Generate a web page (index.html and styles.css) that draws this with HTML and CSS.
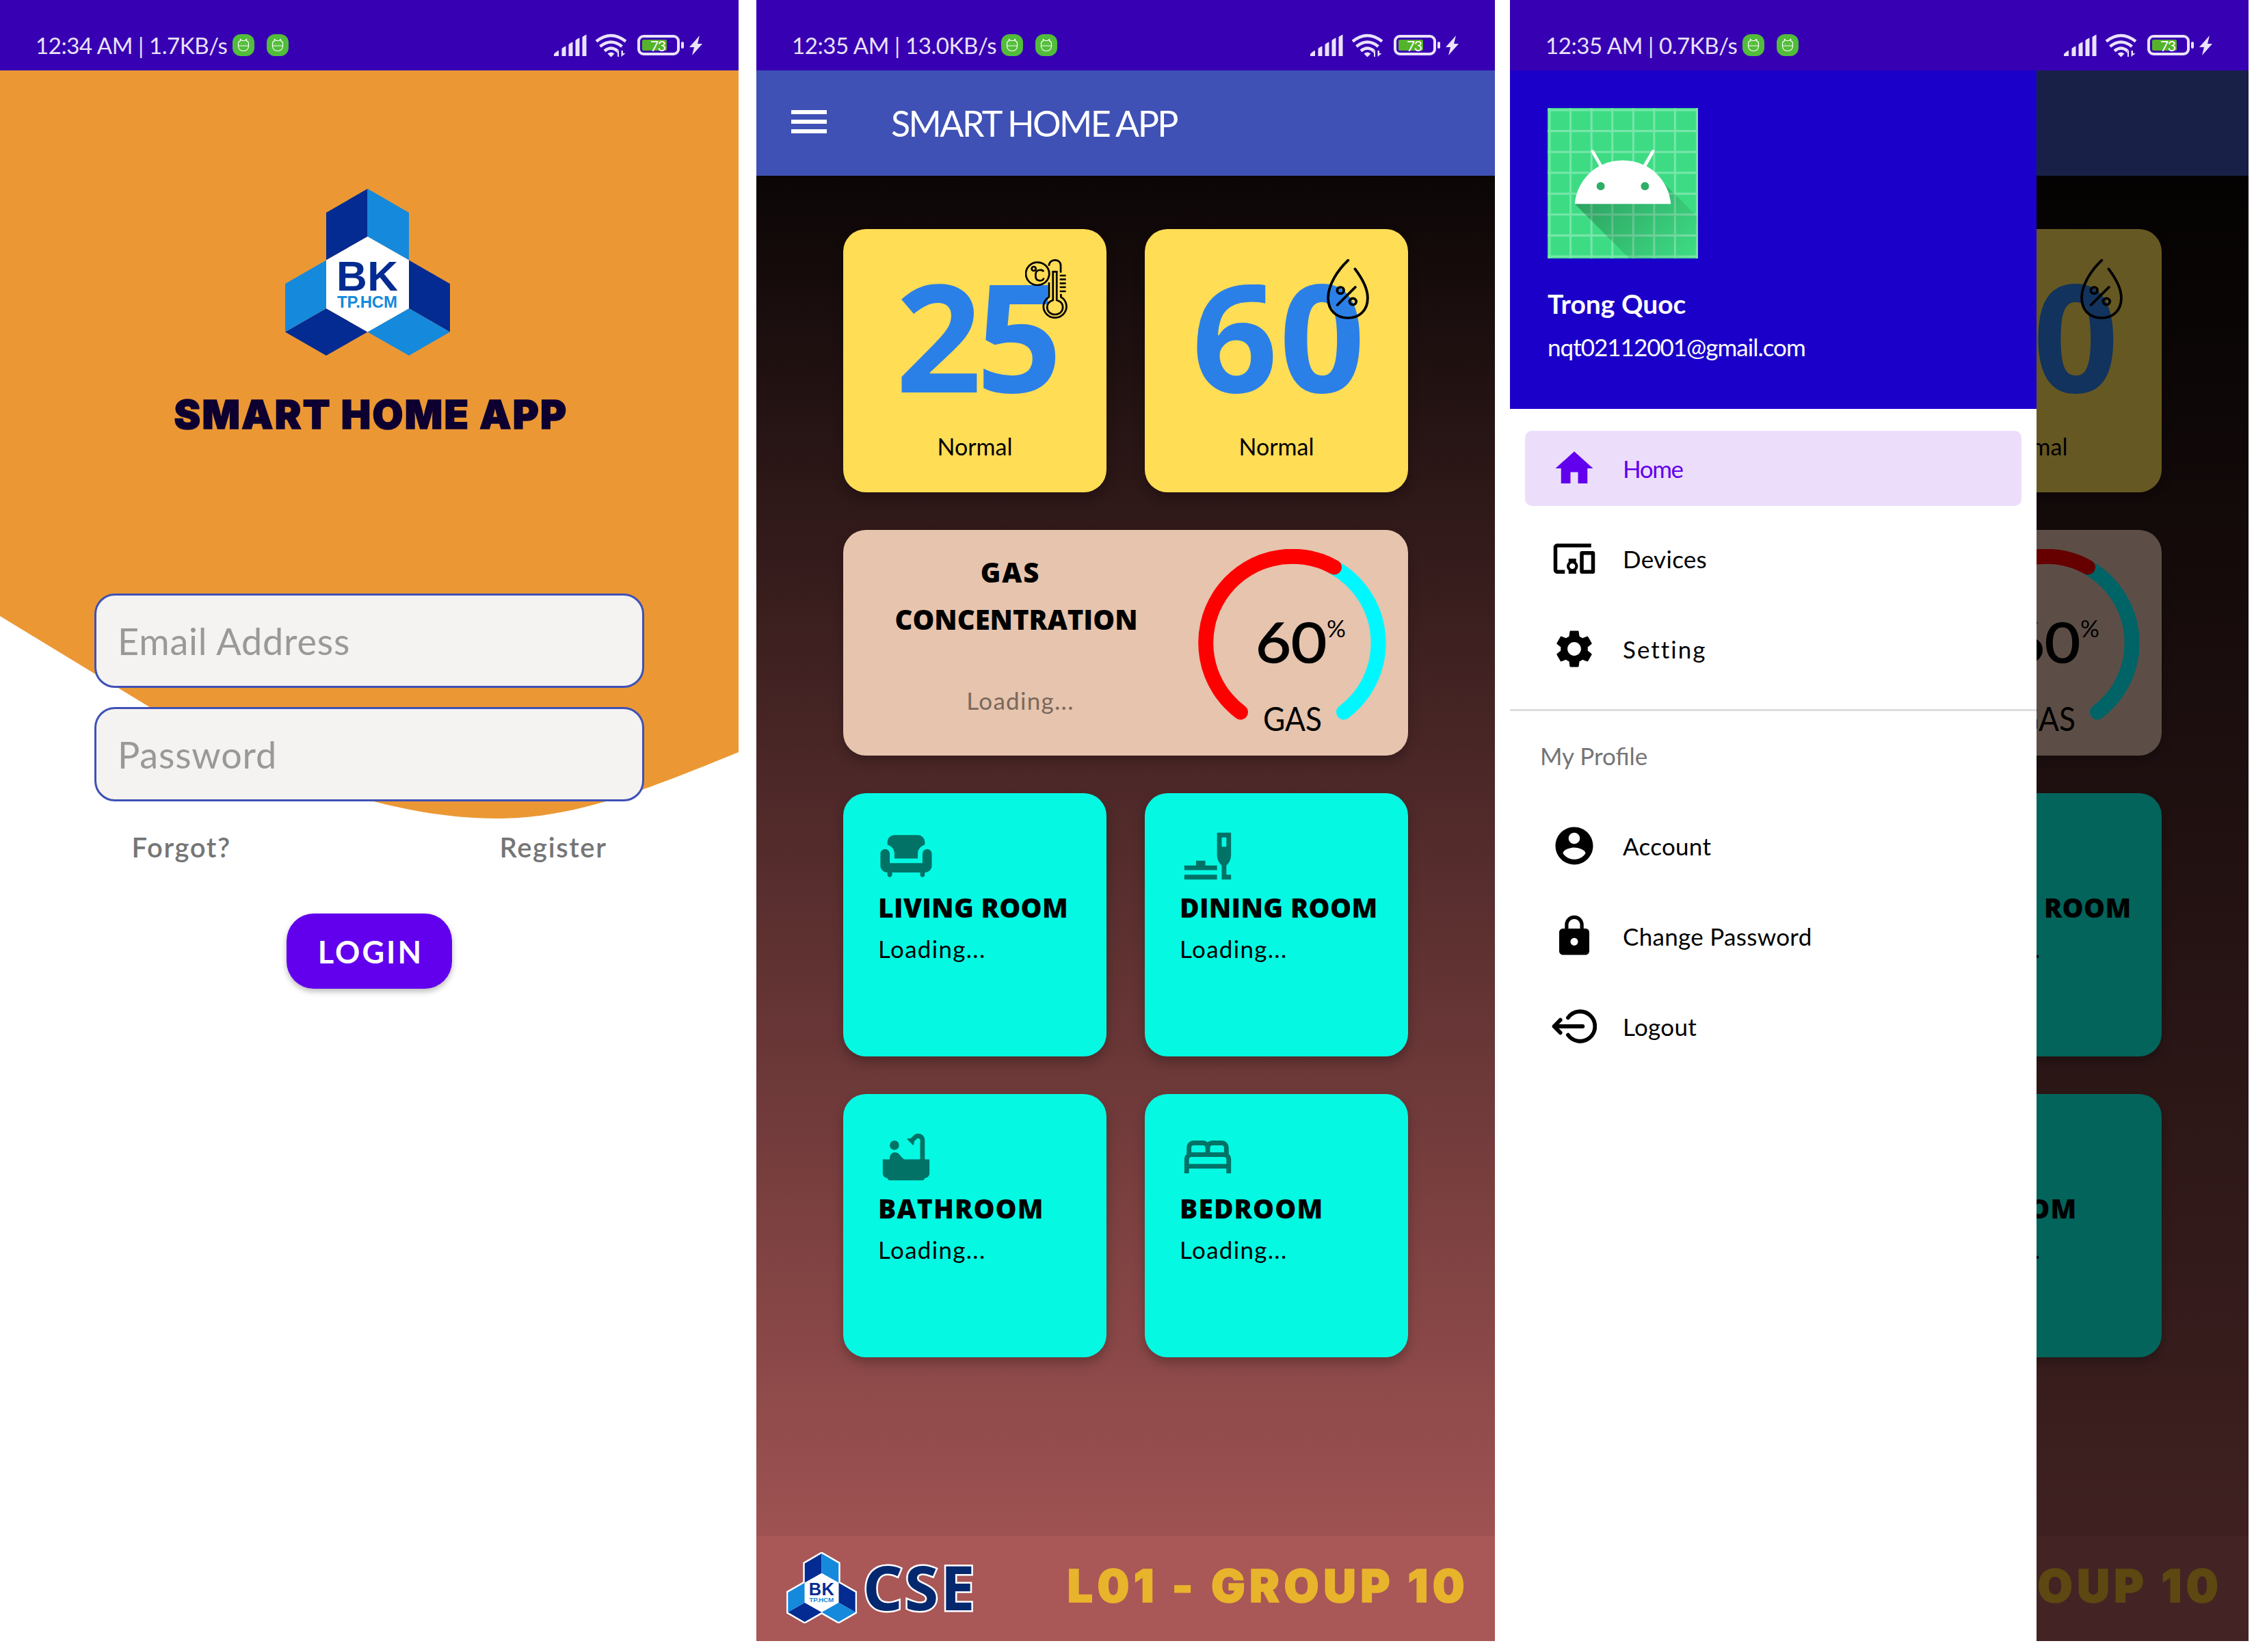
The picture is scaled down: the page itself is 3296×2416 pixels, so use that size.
FILE: index.html
```html
<!DOCTYPE html>
<html lang="en">
<head>
<meta charset="utf-8">
<title>Smart Home App</title>
<link rel="stylesheet" href="styles.css">
</head>
<body>
<svg class="defs" aria-hidden="true">
  <symbol id="bk" viewBox="0 0 241 244">
    <path fill="#032b91" d="M120.500 0V70L60 104.500V35zM0 209.500l60-34.500 60.500 34.500L60 244zM181 104.500l60 34.500v70.500L181 175z"/>
    <path fill="#1589dc" d="M120.500 0V70l60.500 34.500V35zM0 139l60-34.500V175L0 209.500zM120.500 209.500L181 175l60 34.500L181 244z"/>
    <path fill="#fff" d="M120.500 70l60.500 34.500V175l-60.500 34.500L60 175v-70.500z"/>
    <text x="75" y="148.700" font-size="62" font-weight="700" font-family="Liberation Sans" fill="#032b91" textLength="90">BK</text>
    <text x="76" y="174" font-size="24" font-weight="700" font-family="Liberation Sans" fill="#1589dc" textLength="88">TP.HCM</text>
  </symbol>
  <symbol id="app" viewBox="0 0 32 32">
    <rect width="32" height="32" rx="12" fill="#52bd3a"/>
    <path d="M8.500 17h15c0 5-3 7.500-7.500 7.500S8.500 22 8.500 17zv-3c0-3 2-4 3-4.200V7.500l2.500 2h4l2.500-2v2.300c1 .2 3 1.200 3 4.200v3M12.500 14h.6M18.500 14h.6" fill="none" stroke="#fff" stroke-width="1.200"/>
  </symbol>
  <symbol id="status-icons" viewBox="0 0 220 36">
    <path fill="#ebe2fb" d="M0 31q5-5 7-5v8H0zM11.500 23q4-3.500 6-3.500V34h-6zM21.500 17q4-3.500 6-3.500V34h-6zM31.500 11q4-3.500 6-3.500V34h-6zM41.500 6q4-3 6-3.500V34h-6zM78.500 30.500q5-4 10 0l-5 5zM93 35v-6h-2l4-4v10zM101 26v6h-2.500V26zM98.500 35v-9h2v4h4z"/>
    <g fill="none" stroke="#ebe2fb" stroke-width="4.500"><path d="M62 12.500q21.500-17 43 0M67.500 20q16-13 32 0M74 26.500q9.500-8 19 0"/></g>
    <rect x="124" y="5" width="58" height="26" rx="7" fill="none" stroke="#ebe2fb" stroke-width="4"/>
    <rect x="129" y="10" width="36" height="16" rx="2" fill="#55b22a"/>
    <rect x="186" y="13" width="4" height="10" rx="2" fill="#ebe2fb"/>
    <text x="141" y="26.500" font-size="21" font-family="Lato" fill="#fff" textLength="23">73</text>
    <path fill="#ebe2fb" d="M213 4l-15 17h7l-3 12 15-17h-7z"/>
  </symbol>
  <symbol id="thermo" viewBox="55 57 181 264" preserveAspectRatio="none">
    <g fill="none" stroke="#000" stroke-width="8">
      <circle cx="108" cy="121" r="50"/><circle cx="92" cy="99" r="9"/>
      <path d="M134 112c-5-12-33-10-34 10v12c2 22 30 22 35 6M157 86c0-33 50-33 50-2v32M157 159v64a49 49 0 1 0 51 0v-13M174 237V112h16v125c17 5 26 16 26 30 0 44-67 44-67 0 0-14 10-25 25-30zM203 129h26M203 146h26M203 163h26M203 180h26M203 198h26"/>
    </g>
  </symbol>
  <symbol id="drop" viewBox="1337 57 178 264" preserveAspectRatio="none">
    <g fill="none" stroke="#000" stroke-width="11" stroke-linecap="round">
      <path d="M1427 62c-45 45-84 107-84 165 0 55 35 88 83 88s83-33 83-88c0-41-24-87-53-127M1382 258l75-78"/>
      <circle cx="1395" cy="194" r="14"/><circle cx="1447" cy="243" r="14"/>
    </g>
  </symbol>
  <symbol id="gauge" viewBox="0 0 275 275">
    <g fill="none" stroke-width="22" stroke-linecap="round">
      <path stroke="#00f7ff" d="M199 27A126.500 126.500 0 0 1 213 238.500"/>
      <path stroke="red" d="M62 238.500A126.500 126.500 0 0 1 199 26.500"/>
    </g>
    <g font-family="Lato" fill="#000">
      <text x="84" y="166" font-size="82" textLength="104" lengthAdjust="spacingAndGlyphs" stroke="#000" stroke-width="1.500">60</text>
      <text x="188" y="129" font-size="34" textLength="28" lengthAdjust="spacingAndGlyphs">%</text>
      <text x="95" y="266" font-size="49" textLength="86" lengthAdjust="spacingAndGlyphs">GAS</text>
    </g>
  </symbol>
  <symbol id="sofa" viewBox="0 0 24 24"><path d="M7 3h10c1.660 0 3 1.340 3 3v1.200c-1.800.5-3 2-3 3.800v2H7v-2c0-1.800-1.200-3.300-3-3.800V6c0-1.660 1.340-3 3-3zM3 9c1.100 0 2 .9 2 2v4h14v-4c0-1.100.9-2 2-2s2 .9 2 2v5c0 1.660-1.340 3-3 3v1c0 .55-.45 1-1 1s-1-.45-1-1v-1H6v1c0 .55-.45 1-1 1s-1-.45-1-1v-1c-1.660 0-3-1.340-3-3v-5c0-1.100.9-2 2-2z"/></symbol>
  <symbol id="dining" viewBox="0 0 24 24"><path fill-rule="evenodd" d="M16 2h6v9.500c0 2-.9 3.500-2 4.500v4h2v2h-4v-6c-1.100-1-2-2.500-2-4.500zM18 4v4h2V4zM2 16h5v-2h4v2h5v2H2zM2 20h14v2H2z"/></symbol>
  <symbol id="bath" viewBox="0 0 24 24"><circle cx="7" cy="7" r="2"/><path d="M20 13V4.830C20 3.270 18.730 2 17.170 2c-.75 0-1.470.3-2 .83l-1.250 1.250c-.16-.05-.33-.08-.51-.08-.4 0-.77.12-1.080.32l2.760 2.760c.2-.31.32-.68.32-1.080 0-.18-.03-.34-.07-.51l1.250-1.250c.15-.15.36-.24.58-.24.46 0 .83.37.83.83V13h-6.850c-.3-.21-.57-.45-.82-.72l-1.400-1.550c-.19-.21-.43-.38-.69-.5-.31-.15-.65-.23-1-.23C6 10.010 5 11.010 5 12.250V13H2v6c0 1.100.9 2 2 2 0 .55.45 1 1 1h14c.55 0 1-.45 1-1 1.100 0 2-.9 2-2v-6h-2z"/></symbol>
  <symbol id="bed" viewBox="0 0 24 24"><path d="M21 10.780V8c0-1.650-1.350-3-3-3h-4c-.77 0-1.470.3-2 .78-.53-.48-1.230-.78-2-.78H6C4.350 5 3 6.350 3 8v2.780c-.61.55-1 1.340-1 2.220v6h2v-2h16v2h2v-6c0-.88-.39-1.670-1-2.220zM14 7h4c.55 0 1 .45 1 1v2h-6V8c0-.55.45-1 1-1zM5 8c0-.55.45-1 1-1h4c.55 0 1 .45 1 1v2H5V8zm-1 7v-2c0-.55.45-1 1-1h14c.55 0 1 .45 1 1v2H4z"/></symbol>
</svg>

<main class="board">
  <section class="phone login">
    <div class="status"><span class="clock">12:34 AM | 1.7KB/s</span><svg class="app"><use href="#app"/></svg><svg class="app"><use href="#app"/></svg><svg class="sys"><use href="#status-icons"/></svg></div>
    <div class="login-body">
      <svg class="wave" viewBox="0 103 1080 1100"><path fill="#eb9834" d="M0 103H1080V1100C940 1157 840 1197 726 1197C540 1197 340 1103 217 1033L0 901z"/></svg>
      <svg class="login-logo"><use href="#bk"/></svg>
      <h1 class="brand">SMART HOME APP</h1>
      <div class="field"><span>Email Address</span></div>
      <div class="field"><span>Password</span></div>
      <div class="links"><span class="forgot">Forgot?</span><span class="register">Register</span></div>
      <div class="button">LOGIN</div>
    </div>
  </section>

  <section class="phone home">
    <div class="status"><span class="clock wide">12:35 AM | 13.0KB/s</span><svg class="app"><use href="#app"/></svg><svg class="app"><use href="#app"/></svg><svg class="sys"><use href="#status-icons"/></svg></div>
    <div class="toolbar"><div class="burger"><i></i><i></i><i></i></div><span class="bar-title">SMART HOME APP</span></div>
    <div class="cards">
      <div class="card stat"><svg class="stat-icon"><use href="#thermo"/></svg><div class="num temp">25</div><div class="normal">Normal</div></div>
      <div class="card stat"><svg class="stat-icon"><use href="#drop"/></svg><div class="num">60</div><div class="normal">Normal</div></div>
      <div class="card gas"><div class="gas-text"><div class="gas-title"><span class="g1">GAS</span><span class="g2">CONCENTRATION</span></div><div class="loading">Loading...</div></div><svg class="gauge"><use href="#gauge"/></svg></div>
      <div class="card room"><svg class="room-icon"><use href="#sofa"/></svg><div class="room-name">LIVING ROOM</div><div class="loading">Loading...</div></div>
      <div class="card room"><svg class="room-icon"><use href="#dining"/></svg><div class="room-name">DINING ROOM</div><div class="loading">Loading...</div></div>
      <div class="card room"><svg class="room-icon"><use href="#bath"/></svg><div class="room-name spaced">BATHROOM</div><div class="loading">Loading...</div></div>
      <div class="card room"><svg class="room-icon"><use href="#bed"/></svg><div class="room-name spaced">BEDROOM</div><div class="loading">Loading...</div></div>
    </div>
    <div class="footer"><svg class="foot-logo" viewBox="-5 -5 251 254"><path fill="#fff" stroke="#fff" stroke-width="12" d="M120.500 0L181 35v69.500L241 139v70.500L181 244l-60.500-34.500L60 244 0 209.500V139l60-34.500V35z"/><use href="#bk" width="241" height="244"/></svg><span class="cse">CSE</span><span class="group">L01 - GROUP 10</span></div>
  </section>

  <section class="phone home menu-open">
    <div class="status"><span class="clock">12:35 AM | 0.7KB/s</span><svg class="app"><use href="#app"/></svg><svg class="app"><use href="#app"/></svg><svg class="sys"><use href="#status-icons"/></svg></div>
    <div class="toolbar"></div>
    <div class="cards">
      <div class="card stat"></div>
      <div class="card stat"><svg class="stat-icon"><use href="#drop"/></svg><div class="num">60</div><div class="normal">Normal</div></div>
      <div class="card gas"><div class="gas-text"></div><svg class="gauge"><use href="#gauge"/></svg></div>
      <div class="card room"></div>
      <div class="card room"><svg class="room-icon"><use href="#dining"/></svg><div class="room-name">DINING ROOM</div><div class="loading">Loading...</div></div>
      <div class="card room"></div>
      <div class="card room"><svg class="room-icon"><use href="#bed"/></svg><div class="room-name spaced">BEDROOM</div><div class="loading">Loading...</div></div>
    </div>
    <div class="footer"><span class="group">L01 - GROUP 10</span></div>
    <div class="scrim"></div>
    <aside class="drawer">
      <header class="profile">
        <svg class="avatar" viewBox="18 18 72 72">
          <defs><linearGradient id="sh" gradientUnits="userSpaceOnUse" x1="42.900" y1="49.600" x2="85.800" y2="92.500"><stop offset="0" stop-opacity=".27"/><stop offset="1" stop-opacity="0"/></linearGradient></defs>
          <path fill="#3ddc84" d="M18 18h72v72H18z"/>
          <path stroke="#fff" stroke-opacity=".3" stroke-width="1" d="M19 18v72M29 18v72M39 18v72M49 18v72M59 18v72M69 18v72M79 18v72M89.500 18v72M18 19h72M18 29h72M18 39h72M18 49h72M18 59h72M18 69h72M18 79h72M18 89h72"/>
          <path fill="url(#sh)" d="M31 63.900s6.400-11 12.100-13.100c7.200-2.600 26-1.400 26-1.400l38.100 38.100-.2 21.400-32-1z"/>
          <path fill="#fff" d="M65.300 45.830l3.800-6.600c.2-.4.1-.9-.3-1.100-.4-.2-.9-.1-1.100.3l-3.900 6.700c-6.300-2.800-13.400-2.800-19.700 0l-3.900-6.700c-.2-.4-.7-.5-1.100-.3-.3.2-.4.7-.2 1.100l3.800 6.600C36.200 49.430 31.700 56.030 31 63.930h46c-.7-7.900-5.200-14.500-11.700-18.100z"/>
          <circle cx="43.400" cy="55.400" r="1.950" fill="#2fae68"/><circle cx="64.600" cy="55.400" r="1.950" fill="#2fae68"/>
        </svg>
        <div class="name">Trong Quoc</div>
        <div class="mail">nqt02112001@gmail.com</div>
      </header>
      <nav class="nav">
        <div class="item active"><svg viewBox="0 0 24 24"><path d="M10 20v-6h4v6h5v-8h3L12 3 2 12h3v8z"/></svg><span class="tight">Home</span></div>
        <div class="item"><svg viewBox="0 0 24 24"><path d="M3 6h18V4H3c-1.100 0-2 .9-2 2v12c0 1.100.9 2 2 2h4v-2H3V6zm10 6H9v1.780c-.61.55-1 1.330-1 2.220s.39 1.670 1 2.220V20h4v-1.780c.61-.55 1-1.340 1-2.220s-.39-1.670-1-2.220V12zm-2 5.500c-.83 0-1.500-.67-1.500-1.500s.67-1.500 1.500-1.500 1.500.67 1.500 1.500-.67 1.500-1.500 1.500zM22 8h-6c-.5 0-1 .5-1 1v10c0 .5.5 1 1 1h6c.5 0 1-.5 1-1V9c0-.5-.5-1-1-1zm-1 10h-4v-8h4v8z"/></svg><span>Devices</span></div>
        <div class="item"><svg viewBox="0 0 24 24"><path d="M19.140 12.940c.04-.3.06-.61.06-.94 0-.32-.02-.64-.07-.94l2.030-1.580c.18-.14.23-.41.12-.61l-1.920-3.320c-.12-.22-.37-.29-.59-.22l-2.390.96c-.5-.38-1.030-.7-1.620-.94l-.36-2.540c-.04-.24-.24-.41-.48-.41h-3.840c-.24 0-.43.17-.47.41l-.36 2.540c-.59.24-1.130.57-1.620.94l-2.390-.96c-.22-.08-.47 0-.59.22L2.740 8.870c-.12.21-.08.47.12.61l2.030 1.580c-.05.3-.09.63-.09.94s.02.64.07.94l-2.030 1.580c-.18.14-.23.41-.12.61l1.920 3.320c.12.22.37.29.59.22l2.390-.96c.5.38 1.030.7 1.620.94l.36 2.540c.05.24.24.41.48.41h3.840c.24 0 .44-.17.47-.41l.36-2.540c.59-.24 1.130-.56 1.620-.94l2.390.96c.22.08.47 0 .59-.22l1.920-3.320c.12-.22.07-.47-.12-.61l-2.010-1.580zM12 15.600c-1.980 0-3.600-1.620-3.600-3.600s1.620-3.600 3.600-3.600 3.600 1.620 3.600 3.600-1.620 3.600-3.600 3.600z"/></svg><span class="loose">Setting</span></div>
        <div class="rule"></div>
        <div class="group-label">My Profile</div>
        <div class="item"><svg viewBox="0 0 24 24"><path d="M12 2C6.480 2 2 6.480 2 12s4.480 10 10 10 10-4.480 10-10S17.520 2 12 2zm0 3c1.660 0 3 1.340 3 3s-1.340 3-3 3-3-1.340-3-3 1.340-3 3-3zm0 14.200c-2.500 0-4.710-1.280-6-3.220.03-1.990 4-3.080 6-3.080 1.990 0 5.970 1.090 6 3.080-1.290 1.940-3.500 3.220-6 3.220z"/></svg><span>Account</span></div>
        <div class="item"><svg viewBox="0 0 24 24"><path d="M18 8h-1V6c0-2.760-2.240-5-5-5S7 3.240 7 6v2H6c-1.100 0-2 .9-2 2v10c0 1.100.9 2 2 2h12c1.100 0 2-.9 2-2V10c0-1.100-.9-2-2-2zm-6 9c-1.100 0-2-.9-2-2s.9-2 2-2 2 .9 2 2-.9 2-2 2zm3.100-9H8.900V6c0-1.710 1.390-3.100 3.100-3.100s3.100 1.390 3.100 3.100v2z"/></svg><span>Change Password</span></div>
        <div class="item"><svg viewBox="0 0 24 24"><path fill="none" stroke="#000" stroke-width="2.100" stroke-linecap="round" stroke-linejoin="round" d="M1.300 12H16.500M4.600 8.600L1.300 12l3.300 3.400M8.700 7.400a7.900 7.900 0 1 1 0 9.200"/></svg><span>Logout</span></div>
      </nav>
    </aside>
  </section>
</main>
</body>
</html>
```

FILE: styles.css
```css
* { box-sizing: border-box; }
body { margin: 0; background: #fff; color: #000; font-family: Lato, "Liberation Sans", sans-serif; }
svg { display: block; flex: none; }
.defs { display: none; }
.board { display: flex; width: 3296px; height: 2416px; overflow: hidden; white-space: nowrap; }
.phone { position: relative; flex: none; display: flex; flex-direction: column; width: 1080px; height: 2400px; overflow: hidden; }
.login { margin-right: 26px; background: #fff; }
.menu-open { margin-left: 22px; }

/* Status bar */
.status { display: flex; flex: none; align-items: center; height: 103px; padding: 29px 50px 0 52px; background: #3700b3; color: #ebe2fb; }
.clock { width: 288px; font-size: 33px; line-height: 40px; letter-spacing: -0.4px; }
.clock.wide { width: 306px; }
.app { width: 32px; height: 32px; margin-right: 18px; }
.sys { width: 220px; height: 36px; margin-left: auto; }

/* Login */
.login-body { position: relative; display: flex; flex-direction: column; align-items: center; }
.wave { position: absolute; top: 0; left: 0; width: 1080px; height: 1100px; }
.login-body > :not(.wave) { position: relative; }
.login-logo { width: 241px; height: 244px; margin: 173px 5px 0 0; }
.brand { margin: 56px 0 232px; padding-left: 5px; color: #0d0030; font: 900 58px/60px Inter, sans-serif; letter-spacing: 2.3px; -webkit-text-stroke: 1.5px #0d0030; }
.field { display: flex; align-items: center; width: 804px; height: 138px; margin-bottom: 28px; padding-left: 31px; border: 3px solid #3f51b5; border-radius: 30px; background: #f4f3f1; color: #999; font-size: 54px; letter-spacing: .8px; }
.links { display: flex; justify-content: space-between; width: 695px; margin-top: 14px; color: #757575; font-size: 40px; font-weight: 600; line-height: 50px; letter-spacing: 1.6px; }
.button { display: flex; align-items: center; justify-content: center; width: 242px; height: 110px; margin-top: 72px; padding: 2px 0 0 4px; border-radius: 40px; background: #6200ee; box-shadow: 0 4px 8px rgba(0,0,0,.28); color: #fff; font-size: 45px; font-weight: 700; letter-spacing: 3px; }

/* Home */
.home { background: linear-gradient(#000 103px, #aa5858 2400px); }
.toolbar { display: flex; flex: none; align-items: center; height: 154px; padding-left: 51px; background: #3f51b5; color: #fff; font-size: 52px; }
.bar-title { letter-spacing: -2.6px; }
.burger { display: flex; flex-direction: column; gap: 8px; width: 52px; margin: 0 94px 4px 0; }
.burger i { height: 6px; background: #fff; }
.cards { display: grid; flex: 1; grid-template-columns: 385px 385px; grid-template-rows: 385px 330px 385px 385px; gap: 55px 56px; padding: 78px 0 0 127px; }
.card { border-radius: 33px; box-shadow: 0 8px 16px rgba(0,0,0,.25); }
.stat { position: relative; padding-top: 44px; background: #fd5; text-align: center; }
.stat-icon { position: absolute; top: 44px; left: 266px; width: 62px; height: 88px; }
.num { padding-left: 8px; color: #2b80e8; font: 700 220px/220px "Open Sans", sans-serif; letter-spacing: 2px; }
.num.temp { padding-left: 4px; letter-spacing: -8px; }
.normal { margin-top: 34px; font-size: 34px; line-height: 40px; }
.gas { display: flex; grid-column: span 2; padding-top: 27px; background: #e6c4ae; }
.gas-text { display: flex; flex-direction: column; align-items: center; width: 506px; }
.gas-title { display: flex; flex-direction: column; align-items: center; font: 800 40px/69px "Open Sans", sans-serif; }
.g1 { padding-right: 17px; letter-spacing: 2px; }
.gas .loading { margin: 64px 0 0 12px; color: #7a685c; }
.gauge { width: 275px; height: 275px; margin: 1px 0 0 13px; }
.room { padding: 51px 0 0 51px; background: #05f9e2; }
.room-icon { width: 82px; height: 82px; fill: #027267; }
.room-name { margin-top: 7px; font: 800 39px/54px "Open Sans", sans-serif; letter-spacing: .3px; }
.room-name.spaced { letter-spacing: 1.1px; }
.loading { font-size: 35px; line-height: 40px; letter-spacing: 1.3px; }
.room .loading { margin-top: 13px; }
.footer { display: flex; flex: none; align-items: center; height: 154px; padding: 0 38px 2px 44px; background: #a95757; }
.foot-logo { width: 103px; height: 104px; }
.cse { margin: 0 0 5px 9px; color: #04286e; font: 700 90px/90px "Noto Sans", sans-serif; letter-spacing: 3px; -webkit-text-stroke: 5px #fff; paint-order: stroke fill; }
.group { margin: 0 0 7px auto; color: #e8b42c; font: 900 66px/70px Inter, sans-serif; letter-spacing: 6.4px; -webkit-text-stroke: 1.5px #e8b42c; }

/* Drawer */
.scrim { position: absolute; inset: 103px 0 0; background: rgba(0,0,0,.6); }
.drawer { position: absolute; top: 103px; bottom: 0; left: 0; width: 770px; background: #fff; }
.profile { height: 495px; padding: 55px; background: #1b00c9; color: #fff; }
.avatar { width: 220px; height: 220px; }
.name { margin-top: 42px; font-size: 39px; font-weight: 700; line-height: 48px; }
.mail { margin-top: 16px; font-size: 35px; line-height: 46px; letter-spacing: -1px; }
.nav { display: flex; flex-direction: column; padding-top: 32px; }
.item { display: flex; align-items: center; gap: 38px; width: 726px; height: 110px; margin: 0 22px 22px; padding-left: 39px; border-radius: 10px; font-size: 35px; letter-spacing: .3px; }
.item svg { width: 66px; height: 66px; }
.tight { letter-spacing: -1.4px; }
.loose { letter-spacing: 2px; }
.active { background: #ecdefb; color: #6200ee; fill: #6200ee; }
.rule { height: 3px; margin-top: 11px; background: #dedede; }
.group-label { margin: 43px 0 55px 44px; color: #757575; font-size: 35px; line-height: 44px; }
```
